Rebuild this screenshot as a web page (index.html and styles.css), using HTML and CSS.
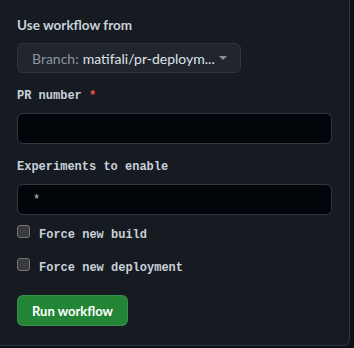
FILE: index.html
```html
<!DOCTYPE html>
<html lang="en">
  <head>
    <meta charset="UTF-8" />
    <meta name="viewport" content="width=device-width, initial-scale=1.0" />
    <title>Run workflow</title>
    <link rel="stylesheet" href="styles.css">
  </head>
  <body>
    <div class="panel">
      <form class="workflow-form">
        <h4 class="title">Use workflow from</h4>
        <button type="button" class="branch-select">
          <span class="branch-prefix">Branch:</span>
          <span class="branch-name">matifali/pr-deploym...</span>
          <span class="caret"></span>
        </button>

        <label class="field-label" for="pr-number">PR number <span class="required">*</span></label>
        <input class="field-input" id="pr-number" type="text" />

        <label class="field-label" for="experiments">Experiments to enable</label>
        <input class="field-input" id="experiments" type="text" value="*" />

        <label class="check-row first">
          <input type="checkbox" class="check" />
          <span>Force new build</span>
        </label>
        <label class="check-row">
          <input type="checkbox" class="check" />
          <span>Force new deployment</span>
        </label>

        <button type="button" class="run-button">Run workflow</button>
      </form>
    </div>
  </body>
</html>
```

FILE: styles.css
```css
body {
  margin: 0;
  background-color: #0d1117;
  font-family: Lato, Arial, sans-serif;
  color: #c9d1d9;
}

.panel {
  width: 349px;
  height: 345px;
  background-color: #161b22;
  border-right: 1px solid #30363d;
  border-bottom: 1px solid #30363d;
  border-bottom-right-radius: 6px;
}

.workflow-form {
  display: flex;
  flex-direction: column;
  align-items: flex-start;
  padding: 15px 0 0 17px;
}

.title {
  margin: 0;
  font-size: 13.5px;
  line-height: 20px;
  font-weight: bold;
  color: #c9d1d9;
}

.branch-select {
  display: flex;
  align-items: center;
  margin-top: 8px;
  width: 224px;
  height: 30px;
  padding: 0 13px 0 14px;
  background-color: #21262d;
  border: 1px solid #30363d;
  border-radius: 6px;
  font-family: inherit;
  font-size: 14px;
  white-space: nowrap;
  cursor: pointer;
}

.branch-prefix {
  color: #8b949e;
  margin-right: 4px;
}

.branch-name {
  color: #dde3ea;
}

.caret {
  margin-left: auto;
  border-top: 4px solid #8b949e;
  border-left: 4px solid transparent;
  border-right: 4px solid transparent;
}

.field-label {
  margin-top: 14px;
  font-family: "Liberation Mono", monospace;
  font-size: 12px;
  line-height: 18px;
  font-weight: bold;
  color: #c9d1d9;
}

.required {
  color: #f85149;
}

.field-input {
  margin-top: 8px;
  width: 315px;
  height: 31px;
  box-sizing: border-box;
  padding: 0 15px;
  background-color: #010409;
  border: 1px solid #30363d;
  border-radius: 6px;
  font-family: "Liberation Mono", monospace;
  font-size: 12px;
  color: #c9d1d9;
  outline: none;
}

.check-row {
  display: flex;
  align-items: baseline;
  margin-top: 14px;
  font-family: "Liberation Mono", monospace;
  font-size: 12px;
  line-height: 18px;
  font-weight: bold;
  color: #c9d1d9;
}

.check-row.first {
  margin-top: 10px;
}

.check {
  appearance: none;
  width: 13px;
  height: 13px;
  margin: 0 9px 0 0;
  background-color: #3b3b3b;
  border: 1px solid #767676;
  border-radius: 3px;
}

.run-button {
  margin-top: 18px;
  height: 31px;
  padding: 0 14px;
  background-color: #238636;
  border: 1px solid rgba(240, 246, 252, 0.1);
  border-radius: 6px;
  color: #ffffff;
  font-family: inherit;
  font-size: 13px;
  font-weight: bold;
  cursor: pointer;
}
```
